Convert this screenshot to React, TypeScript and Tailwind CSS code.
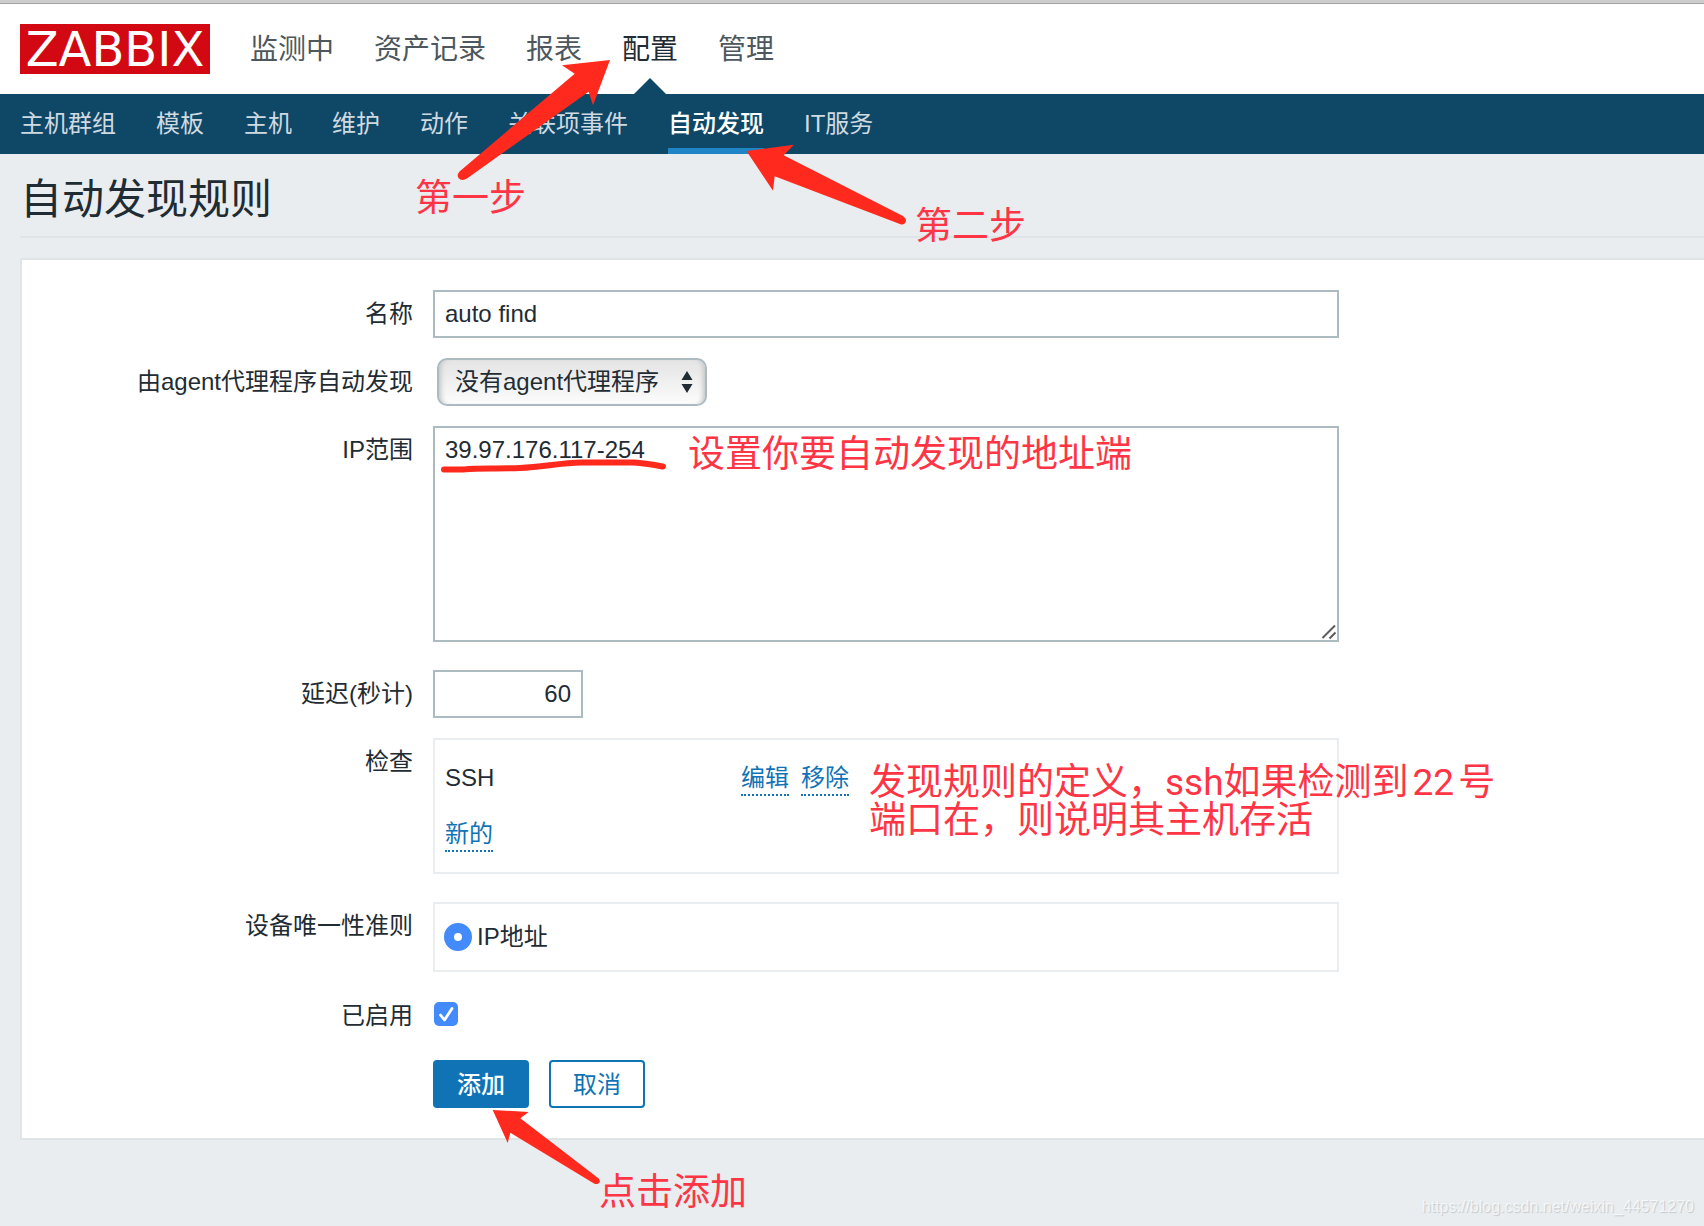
import type { ReactNode } from 'react'
import { clsx } from 'clsx'

const mainMenu = ['监测中', '资产记录', '报表', '配置', '管理']
const subMenu = ['主机群组', '模板', '主机', '维护', '动作', '关联项事件', '自动发现', 'IT服务']

const inputClass = 'h-12 border-2 border-[#acbbc2] bg-white px-[10px] text-[24px] text-[#1f2c33] outline-none'
const linkClass = 'inline-block border-b-2 border-dotted border-[#0f73b6] pt-[2px] leading-[32px] text-[#0f73b6]'

export default function App() {
  return (
    <div className="relative min-h-screen overflow-hidden bg-[#e9edf0] font-['Liberation_Sans','Noto_Sans_CJK_SC',sans-serif] text-[24px] text-[#1f2c33]">
      <Header />

      <main className="pl-5">
        <h1 className="border-b-2 border-[#dfe4e7] pt-[10px] text-[42px] leading-[72px]">自动发现规则</h1>
        <DiscoveryForm />
      </main>

      <Annotations />
    </div>
  )
}

function Header() {
  return (
    <header>
      <div className="h-1 border-b border-[#a2a2a2] bg-[#cdcdcd]" />
      <div className="flex h-[90px] items-center gap-10 bg-white pl-5">
        <a
          href="#"
          className="flex h-[50px] w-[190px] items-center justify-center bg-[#d20812] font-['DejaVu_Sans',sans-serif] text-[48px] leading-none text-white"
        >
          ZABBIX
        </a>
        <nav className="flex h-full gap-10 text-[28px] leading-[92px]">
          {mainMenu.map((item) => {
            const active = item === '配置'
            return (
              <a key={item} href="#" className={clsx('relative', active ? 'text-[#1f2c33]' : 'text-[#4d575d]')}>
                {item}
                {active && (
                  <svg viewBox="0 0 32 16" className="absolute bottom-0 left-1/2 h-4 w-8 -translate-x-1/2">
                    <path d="M0 16 16 0l16 16z" fill="#0f4867" />
                  </svg>
                )}
              </a>
            )
          })}
        </nav>
      </div>
      <nav className="flex h-[60px] gap-10 bg-[#0f4867] pl-5 leading-[60px]">
        {subMenu.map((item) => (
          <a
            key={item}
            href="#"
            className={clsx(
              'h-full',
              item === '自动发现'
                ? 'font-medium text-white shadow-[inset_0_-6px_0_#1f85c7]'
                : 'text-[#cfdae1]'
            )}
          >
            {item}
          </a>
        ))}
      </nav>
    </header>
  )
}

function DiscoveryForm() {
  return (
    <form
      className="mt-5 flex flex-col gap-5 border-2 border-r-0 border-[#dfe4e7] bg-white py-[30px]"
      onSubmit={(e) => e.preventDefault()}
    >
      <Row label="名称" htmlFor="name">
        <input id="name" type="text" defaultValue="auto find" className={clsx(inputClass, 'w-full')} />
      </Row>

      <Row label="由agent代理程序自动发现" htmlFor="proxy">
        <div className="relative ml-1 w-[270px]">
          <select
            id="proxy"
            className="h-12 w-full appearance-none rounded-[10px] border-2 border-[#acbbc2] bg-linear-to-b from-[#e4e4e4] to-[#fcfcfc] pl-4 text-[24px] text-[#1f2c33] shadow-[inset_6px_0_5px_-4px_#c4c4c4,inset_-6px_0_5px_-4px_#c4c4c4] outline-none"
          >
            <option>没有agent代理程序</option>
          </select>
          <svg viewBox="0 0 12 22" className="pointer-events-none absolute top-[13px] right-[14px] h-[22px] w-3">
            <path d="M6 0l5.500 9h-11zM6 22l5.500-9h-11z" fill="#1f2c33" />
          </svg>
        </div>
      </Row>

      <Row label="IP范围" htmlFor="range">
        <div className="relative mb-2">
          <textarea
            id="range"
            defaultValue="39.97.176.117-254"
            className={clsx(inputClass, 'block h-[216px] w-full resize-none py-[7px] leading-[30px]')}
          />
          <svg viewBox="0 0 16 16" className="pointer-events-none absolute right-[2px] bottom-[2px] size-4">
            <path d="M1.500 14 14 1.500M8.500 14.500 14.500 8.500" fill="none" stroke="#5c5c5c" strokeWidth="2" />
          </svg>
        </div>
      </Row>

      <Row label="延迟(秒计)" htmlFor="delay">
        <input id="delay" type="text" defaultValue="60" className={clsx(inputClass, 'w-[150px] text-right')} />
      </Row>

      <Row label="检查">
        <div className="mb-2 border-2 border-[#e9edf0] p-[10px]">
          <table className="w-full">
            <tbody>
              <tr className="h-14">
                <td className="w-[296px]">SSH</td>
                <td>
                  <div className="flex gap-3">
                    <a href="#" className={linkClass}>编辑</a>
                    <a href="#" className={linkClass}>移除</a>
                  </div>
                </td>
              </tr>
              <tr className="h-14">
                <td colSpan={2}>
                  <div className="flex">
                    <a href="#" className={linkClass}>新的</a>
                  </div>
                </td>
              </tr>
            </tbody>
          </table>
        </div>
      </Row>

      <Row label="设备唯一性准则">
        <div className="flex h-[70px] items-center border-2 border-[#e9edf0] px-[9px]">
          <label className="flex items-center gap-[5px]">
            <input
              type="radio"
              name="uniqueness"
              defaultChecked
              className="size-7 appearance-none rounded-full border-[10px] border-[#438afa] bg-white"
            />
            IP地址
          </label>
        </div>
      </Row>

      <Row label="已启用" htmlFor="enabled">
        <div className="flex h-11 items-center">
          <div className="relative ml-px size-6">
            <input
              id="enabled"
              type="checkbox"
              defaultChecked
              className="block size-6 appearance-none rounded-[5px] bg-[#438afa]"
            />
            <svg viewBox="0 0 24 24" className="pointer-events-none absolute inset-0 size-6">
              <path
                d="M6.500 13l4 5 7.500-11.500"
                fill="none"
                stroke="#fff"
                strokeWidth="2.800"
                strokeLinecap="round"
                strokeLinejoin="round"
              />
            </svg>
          </div>
        </div>
      </Row>

      <Row>
        <div className="flex gap-5">
          <button type="submit" className="h-12 w-24 rounded-[4px] bg-[#0f73b6] pt-[2px] font-medium text-white">
            添加
          </button>
          <button
            type="button"
            className="h-12 w-24 rounded-[4px] border-2 border-[#0f73b6] bg-white pt-[2px] text-[#0f73b6]"
          >
            取消
          </button>
        </div>
      </Row>
    </form>
  )
}

function Row({ label, htmlFor, children }: { label?: string; htmlFor?: string; children: ReactNode }) {
  const labelClass = 'w-[391px] shrink-0 text-right leading-[48px]'
  return (
    <div className="flex gap-5">
      {htmlFor ? (
        <label htmlFor={htmlFor} className={labelClass}>
          {label}
        </label>
      ) : (
        <div className={labelClass}>{label}</div>
      )}
      <div className="w-full max-w-[906px]">{children}</div>
    </div>
  )
}

// Red tutorial marks drawn over the page
function Annotations() {
  return (
    <div className="pointer-events-none absolute inset-0 font-['Roboto','Noto_Sans_CJK_SC',sans-serif] text-[37px] leading-[38px] text-[#ff3545]">
      <svg viewBox="457 59 154 122" className="absolute top-[59px] left-[457px] h-[122px] w-[154px]" fill="#ff2a1d">
        <path d="M610 60 562 65.300 574.700 73.700 459.500 171.500Q456.500 175 458.500 178Q461.500 181.500 467 178.500L588.600 91.700 593 105.300Z" />
      </svg>
      <p className="absolute top-[180px] left-[415px] whitespace-nowrap">第一步</p>

      <svg viewBox="745 143 163 84" className="absolute top-[143px] left-[745px] h-[84px] w-[163px]" fill="#ff2a1d">
        <path d="M746.500 151 793.900 144.700 783.700 155.300 902.500 215.700Q906 218 906 221Q904.500 225.500 900.500 224.300L774.700 176.300 773 190.700Z" />
      </svg>
      <p className="absolute top-[208px] left-[915px] whitespace-nowrap">第二步</p>

      <svg viewBox="436 456 236 20" className="absolute top-[456px] left-[436px] h-5 w-[236px]">
        <path
          d="M444 469.500H464C470 467.500 500 469 520 468C545 466.500 560 463 582 462.500H634C645 463 655 465 663 466.500"
          fill="none"
          stroke="#ff2a1d"
          strokeWidth="6"
          strokeLinecap="round"
        />
      </svg>
      <p className="absolute top-[436px] left-[688px] whitespace-nowrap">设置你要自动发现的地址端</p>

      <p className="absolute top-[764px] left-[869px] whitespace-nowrap">
        发现规则的定义，ssh如果检测到<span className="mx-1">22</span>号
        <br />
        端口在，则说明其主机存活
      </p>

      <svg viewBox="492 1109 110 76" className="absolute top-[1109px] left-[492px] h-[76px] w-[110px]" fill="#ff2a1d">
        <path d="M492.700 1110 528.700 1112 520.300 1118.300 598.700 1178.500Q600.500 1181 599.500 1182.500Q597.500 1185 594 1183.500L510.300 1132.700 507.700 1143Z" />
      </svg>
      <p className="absolute top-[1174px] left-[599px] whitespace-nowrap">点击添加</p>

      <p className="absolute right-[10px] bottom-[8px] font-['Liberation_Sans',sans-serif] text-[16px] leading-[22px] text-white/70 [text-shadow:1px_1px_1px_#c4c8cb]">
        https://blog.csdn.net/weixin_44571270
      </p>
    </div>
  )
}
